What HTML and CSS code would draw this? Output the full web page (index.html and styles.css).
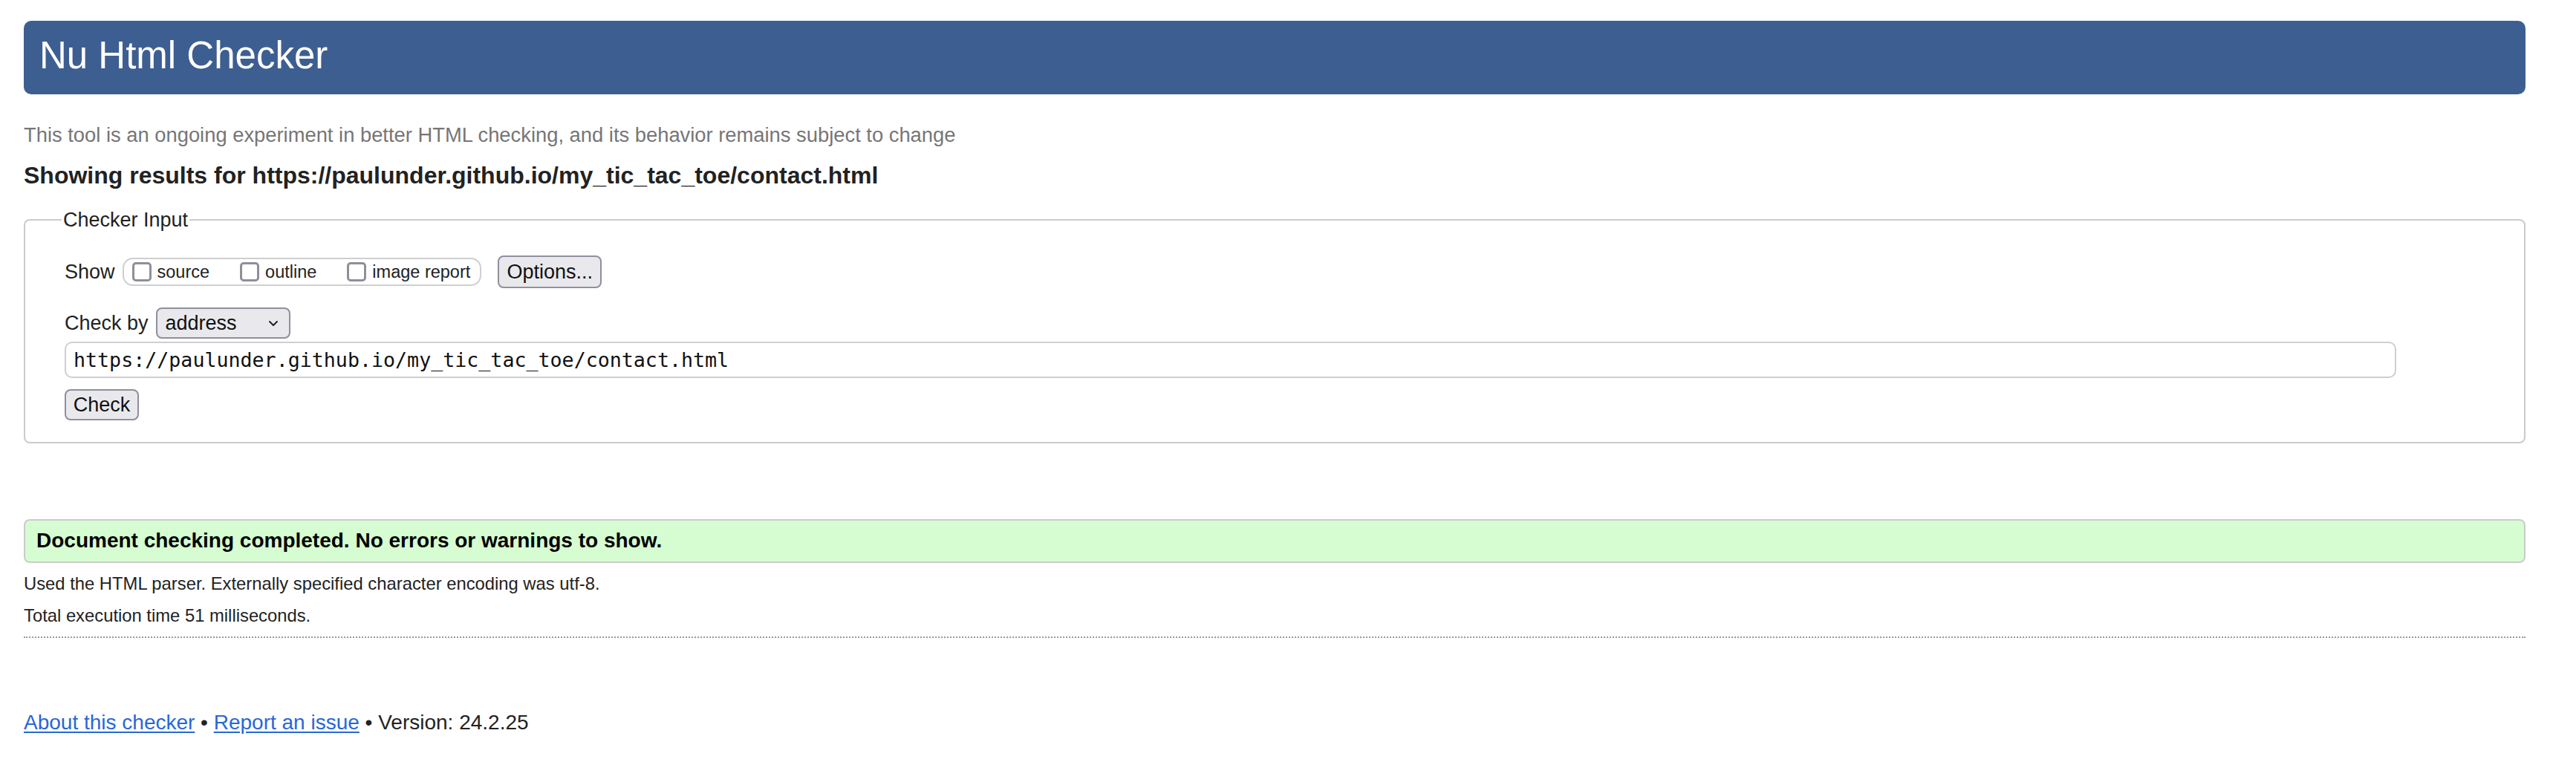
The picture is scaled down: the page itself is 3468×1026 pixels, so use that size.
FILE: index.html
```html
<!DOCTYPE html>
<html lang="en">
<head>
<meta charset="utf-8">
<title>Showing results for https://paulunder.github.io/my_tic_tac_toe/contact.html - Nu Html Checker</title>
<link rel="stylesheet" href="styles.css">
</head>
<body>
<h1 class="title">Nu Html Checker</h1>
<p class="subtitle">This tool is an ongoing experiment in better HTML checking, and its behavior remains subject to change</p>
<p class="showing">Showing results for https://paulunder.github.io/my_tic_tac_toe/contact.html</p>

<form class="checker">
  <fieldset class="input-set">
    <legend class="legend">Checker Input</legend>
    <div class="row row-show">
      <span class="label">Show</span>
      <span class="pill">
        <label class="opt"><span class="cb"></span><span class="opt-text">source</span></label>
        <label class="opt"><span class="cb"></span><span class="opt-text">outline</span></label>
        <label class="opt"><span class="cb"></span><span class="opt-text">image report</span></label>
      </span>
      <span class="btn btn-options">Options...</span>
    </div>
    <div class="row row-by">
      <span class="label">Check by</span>
      <span class="select">
        <span class="select-text">address</span>
        <svg class="chev" width="14" height="9" viewBox="0 0 14 9"><polyline points="2,2 7,7 12,2" fill="none" stroke="#222" stroke-width="2" stroke-linecap="round" stroke-linejoin="round"/></svg>
      </span>
    </div>
    <div class="url">https://paulunder.github.io/my_tic_tac_toe/contact.html</div>
    <div class="row row-check">
      <span class="btn btn-check">Check</span>
    </div>
  </fieldset>
</form>

<div class="success">Document checking completed. No errors or warnings to show.</div>
<p class="details">Used the HTML parser. Externally specified character encoding was utf-8.</p>
<p class="details details-2">Total execution time 51 milliseconds.</p>
<hr class="dots">

<p class="footer"><a href="#">About this checker</a> • <a href="#">Report an issue</a> • Version: 24.2.25</p>
</body>
</html>
```

FILE: styles.css
```css
html, body {
  background: #fff;
}
body {
  margin: 0;
  padding: 28px 68px 0 32px;
  font-family: "Liberation Sans", Arial, Helvetica, sans-serif;
  color: #222;
}
.title {
  margin: 0;
  height: 99px;
  box-sizing: border-box;
  padding: 0 0 5px 21px;
  line-height: 94px;
  font-size: 51px;
  font-weight: normal;
  color: #fff;
  background: #3d5e91;
  border-radius: 10px;
}
.subtitle {
  margin: 39px 0 0 0;
  font-size: 27.35px;
  line-height: 32px;
  color: #767676;
}
.showing {
  margin: 19px 0 0 0;
  font-size: 32px;
  line-height: 38px;
  font-weight: bold;
  color: #222;
}
.checker {
  margin: 25px 0 0 0;
}
.input-set {
  margin: 0;
  padding: 32px 20px 29px 53px;
  border: 2px solid #cbcbcb;
  border-radius: 8px;
  min-width: 0;
}
.legend {
  margin-left: -4px;
  padding: 0 2px;
  font-size: 27px;
  line-height: 32px;
  color: #222;
}
.row {
  display: flex;
  align-items: center;
}
.label {
  font-size: 27px;
  line-height: 32px;
}
.row-show {
  height: 44px;
}
.pill {
  display: flex;
  align-items: center;
  margin-left: 10px;
  height: 38px;
  box-sizing: border-box;
  padding: 0 13px 0 11px;
  border: 2px solid #cfcfcf;
  border-radius: 14px;
  gap: 41px;
}
.opt {
  display: flex;
  align-items: center;
  gap: 8px;
}
.cb {
  display: block;
  width: 26px;
  height: 26px;
  box-sizing: border-box;
  border: 3px solid #8f8f98;
  border-radius: 5px;
  background: #fff;
}
.opt-text {
  font-size: 23.5px;
  line-height: 28px;
}
.btn {
  display: inline-flex;
  align-items: center;
  justify-content: center;
  box-sizing: border-box;
  height: 44px;
  border: 2px solid #8f8f9d;
  border-radius: 8px;
  background: #e9e9ed;
  font-size: 27px;
  color: #111;
}
.btn-options {
  margin-left: 22px;
  width: 140px;
}
.row-by {
  margin-top: 26px;
  height: 42px;
}
.select {
  display: flex;
  align-items: center;
  justify-content: space-between;
  margin-left: 10px;
  width: 181px;
  height: 42px;
  box-sizing: border-box;
  padding: 0 14px 0 11px;
  border: 2px solid #8f8f9d;
  border-radius: 8px;
  background: #e9e9ed;
  font-size: 27px;
  color: #111;
}
.chev {
  display: block;
}
.url {
  margin-top: 4px;
  width: 3139px;
  height: 49px;
  box-sizing: border-box;
  padding: 0 10px;
  border: 2px solid #cfcfcf;
  border-radius: 10px;
  font-family: "DejaVu Sans Mono", "Liberation Mono", monospace;
  font-size: 26.65px;
  line-height: 45px;
  color: #111;
}
.row-check {
  margin-top: 15px;
}
.btn-check {
  width: 100px;
  height: 42px;
}
.success {
  margin-top: 102px;
  height: 59px;
  box-sizing: border-box;
  padding: 0 0 2px 15px;
  border: 2px solid #cbcbcb;
  border-radius: 8px;
  background: #d6fcd1;
  font-size: 28px;
  line-height: 53px;
  font-weight: bold;
  color: #000;
}
.details {
  margin: 14px 0 0 0;
  font-size: 23.8px;
  line-height: 28px;
  color: #222;
}
.details-2 {
  margin-top: 15px;
}
.dots {
  margin: 14px 0 0 0;
  height: 0;
  border: 0;
  border-top: 2px dotted #999;
}
.footer {
  margin: 98px 0 0 0;
  font-size: 28px;
  line-height: 32px;
  color: #222;
}
.footer a {
  color: #2867d6;
  text-decoration: underline;
  text-underline-offset: 3px;
}
```
